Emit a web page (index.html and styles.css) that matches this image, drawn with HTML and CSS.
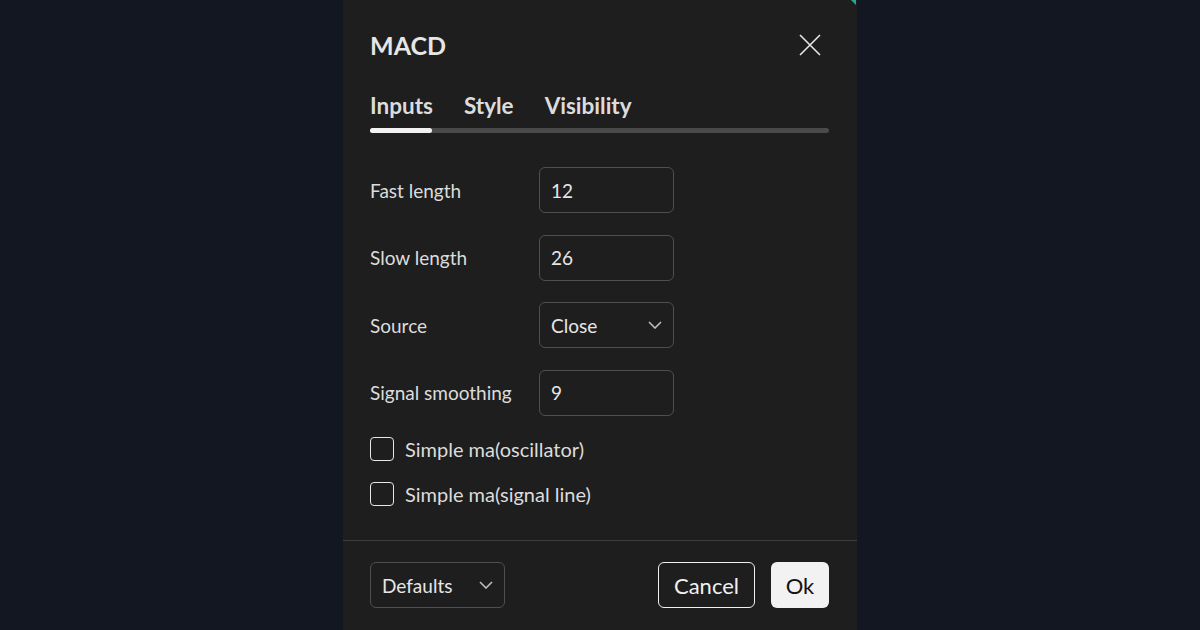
FILE: index.html
```html
<!DOCTYPE html>
<html lang="en">
<head>
    <meta charset="UTF-8">
    <meta name="viewport" content="width=device-width, initial-scale=1.0">
    <title>MACD settings</title>
    <link rel="stylesheet" href="styles.css">
</head>
<body>
    <div class="dialog">
        <span class="corner"></span>
        <div class="dialog-head">
            <h1 class="title">MACD</h1>
            <button class="close" aria-label="Close">
                <svg width="22" height="22" viewBox="0 0 22 22">
                    <path d="M1 1 L21 21 M21 1 L1 21" stroke="#e6e6e6" stroke-width="1.6" fill="none"/>
                </svg>
            </button>
        </div>

        <div class="tabs">
            <span class="tab active">Inputs</span>
            <span class="tab">Style</span>
            <span class="tab">Visibility</span>
        </div>
        <div class="track"><div class="track-bar"></div></div>

        <div class="form">
            <div class="row">
                <label>Fast length</label>
                <div class="field">12</div>
            </div>
            <div class="row">
                <label>Slow length</label>
                <div class="field">26</div>
            </div>
            <div class="row">
                <label>Source</label>
                <div class="field select">
                    <span>Close</span>
                    <svg width="14" height="8" viewBox="0 0 14 8"><path d="M1 1 L7 7 L13 1" stroke="#bdbdbd" stroke-width="1.6" fill="none"/></svg>
                </div>
            </div>
            <div class="row">
                <label>Signal smoothing</label>
                <div class="field">9</div>
            </div>
            <div class="check-row">
                <span class="box"></span>
                <span>Simple ma(oscillator)</span>
            </div>
            <div class="check-row">
                <span class="box"></span>
                <span>Simple ma(signal line)</span>
            </div>
        </div>

        <div class="dialog-foot">
            <div class="field select defaults">
                <span>Defaults</span>
                <svg width="14" height="8" viewBox="0 0 14 8"><path d="M1 1 L7 7 L13 1" stroke="#bdbdbd" stroke-width="1.6" fill="none"/></svg>
            </div>
            <div class="actions">
                <button class="btn cancel">Cancel</button>
                <button class="btn ok">Ok</button>
            </div>
        </div>
    </div>
</body>
</html>
```

FILE: styles.css
```css
body {
    display: flex;
    justify-content: center;
    height: 100vh;
    margin: 0px;
    padding: 0px;
    background-color: #131722;
    font-family: "Lato", "Noto Sans", sans-serif;
    color: #dcdcdc;
    overflow: hidden;
}

.dialog {
    position: relative;
    width: 514px;
    height: 630px;
    background-color: #1e1e1e;
    display: flex;
    flex-direction: column;
}

.corner {
    position: absolute;
    top: 0;
    right: 1px;
    width: 0;
    height: 0;
    border-top: 5px solid #22ab94;
    border-left: 5px solid transparent;
}

.dialog-head {
    display: flex;
    justify-content: space-between;
    align-items: center;
    padding: 26px 36px 0 27px;
    height: 38px;
}

.title {
    margin: 0;
    font-size: 25px;
    font-weight: 700;
    color: #e6e6e6;
}

.close {
    background: none;
    border: none;
    padding: 0;
    display: flex;
}

.tabs {
    display: flex;
    gap: 31px;
    padding: 28px 27px 0 27px;
}

.tab {
    font-size: 22.5px;
    font-weight: 700;
    color: #dcdcdc;
}

.track {
    margin: 9px 28px 0 27px;
    height: 5px;
    border-radius: 3px;
    background-color: #4a4a4a;
}

.track-bar {
    width: 62px;
    height: 5px;
    border-radius: 3px;
    background-color: #f2f2f2;
}

.form {
    display: flex;
    flex-direction: column;
    gap: 21.5px;
    padding: 34px 27px 0 27px;
    flex: 1;
}

.row {
    display: flex;
    align-items: center;
    font-size: 19px;
}

.row label {
    width: 169px;
}

.field {
    box-sizing: border-box;
    width: 135px;
    height: 46px;
    border: 1px solid #4f4f4f;
    border-radius: 6px;
    padding: 0 11px;
    display: flex;
    align-items: center;
    justify-content: space-between;
    font-size: 19px;
    color: #e6e6e6;
}

.check-row {
    display: flex;
    align-items: center;
    gap: 11px;
    font-size: 20px;
    height: 24px;
}

.check-row + .check-row {
    margin-top: -1px;
}

.box {
    box-sizing: border-box;
    width: 24px;
    height: 24px;
    border: 1.5px solid #e6e6e6;
    border-radius: 4px;
}

.dialog-foot {
    display: flex;
    justify-content: space-between;
    align-items: center;
    border-top: 1px solid #3d3d3d;
    padding: 21px 28px 22px 27px;
}

.actions {
    display: flex;
    gap: 16px;
}

.btn {
    box-sizing: border-box;
    height: 46px;
    border-radius: 6px;
    font-family: "Lato", "Noto Sans", sans-serif;
    font-size: 22px;
    padding: 0 12px;
}

.cancel {
    width: 97px;
    background-color: transparent;
    border: 1.5px solid #f0f0f0;
    color: #f0f0f0;
}

.ok {
    width: 58px;
    background-color: #f2f2f2;
    border: none;
    color: #131313;
}
```
